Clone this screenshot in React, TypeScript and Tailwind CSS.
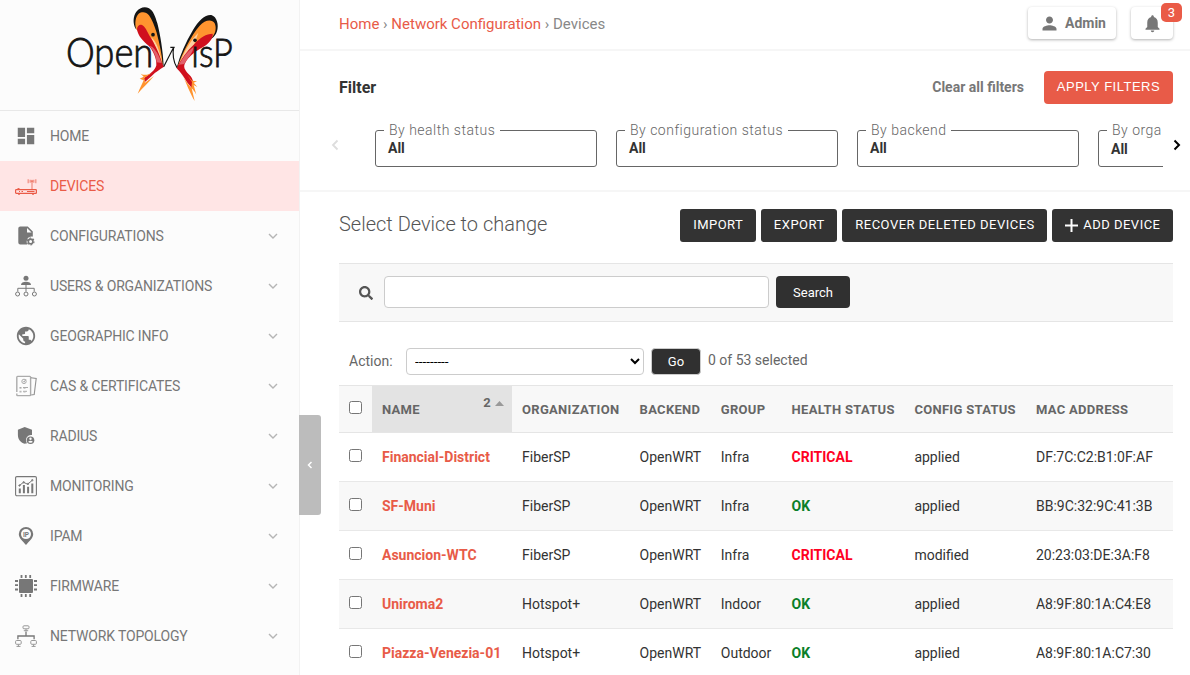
import React from "react";
import { MdDashboard, MdPublic, MdPerson, MdNotifications } from "react-icons/md";
import { FaSearch } from "react-icons/fa";

function Logo() {
  return (
    <svg width="200" height="110" viewBox="0 0 600 330" aria-label="OpenWISP">
      <path d="M257 86C248 70 249 48 259 35C269 22 285 18 297 25C311 33 316 51 322 70C331 105 339 155 341 198L336 192L300 110Z" fill="#151515" />
      <path d="M259 88C253 70 257 49 266 41C275 35 289 35 297 46C306 58 313 77 320 98C329 132 336 165 338 194L316 160Z" fill="#ff942f" />
      <path d="M303 112C316 120 326 142 337 190L324 158Z" fill="#ffd0a0" />
      <path d="M261 88C262 76 269 72 276 75C286 80 291 94 299 108C312 129 327 155 336 190L342 200C329 209 317 215 306 227L284 247L282 234C299 223 316 211 319 196C320 174 309 152 297 138C279 124 264 108 261 88Z" fill="#d0101e" />
      <path d="M298 138C309 138 324 156 335 189L320 187C318 166 309 149 298 138Z" fill="#e2616b" />
      <path d="M306 219C294 225 283 227 272 221L281 230L269 236L281 241C275 254 270 265 263 281C277 265 296 247 312 228L285 248L283 233Z" fill="#ff942f" />
      <path d="M380 203C390 166 407 126 429 90C446 61 466 43 484 45C501 50 507 75 501 94C498 104 493 110 486 115L430 150Z" fill="#151515" />
      <path d="M383 200C396 160 425 104 449 77C464 61 485 56 494 70C501 85 495 103 487 111L420 164Z" fill="#ff942f" />
      <path d="M386 196C400 158 420 123 445 98L430 140Z" fill="#ffd0a0" />
      <path d="M488 101C490 115 476 132 458 142C430 157 409 177 403 195C400 208 413 219 422 229C431 241 431 253 426 265L411 247C401 230 393 218 380 205C393 176 411 153 434 131C450 113 469 101 488 101Z" fill="#d0101e" />
      <path d="M387 194C399 171 415 152 431 141C430 158 412 175 403 192Z" fill="#e2616b" />
      <path d="M392 218C406 236 408 255 434 303L425 265C430 270 434 275 439 284L431 255L442 261L431 248L441 244L426 242L412 225L426 246L424 264L410 247Z" fill="#ff942f" />
      <circle cx="309" cy="104" r="5.5" fill="#151515" />
      <circle cx="435" cy="121" r="5.5" fill="#151515" />
      <path d="M341 200L371 142C367 160 370 187 381 203M361 142H374" stroke="#151515" strokeWidth="3.5" fill="none" />
      <g fill="#151515" stroke="#151515" strokeWidth="2.5" fontFamily="'Lato', sans-serif" fontWeight="300">
        <text x="48" y="202" fontSize="121" textLength="262" lengthAdjust="spacingAndGlyphs">Open</text>
        <text x="424" y="202" fontSize="118" textLength="124" lengthAdjust="spacingAndGlyphs">ısP</text>
      </g>
    </svg>
  );
}

function IconSvg({ children }: { children: React.ReactNode }) {
  return <svg width="22" height="22" viewBox="0 0 22 22" fill="none" stroke="currentColor">{children}</svg>;
}

const DeviceIcon = () => (
  <IconSvg>
    <rect x=".6" y="14.6" width="20.8" height="3.8" rx=".7" strokeWidth="1.2" />
    <path d="M2.5 13.6h2M3 19.2h2M17 19.2h2M4 16.5h1M6.5 16.5h1.5M12 16.5h7.5" strokeWidth="1" />
    <path d="M17 6v8.5M15.2 4.7v3M18.8 4.7v3M13.2 4.2v4M20.8 4.2v4" strokeWidth="1.3" opacity=".6" />
    <circle cx="17" cy="6" r="1.2" fill="currentColor" stroke="none" opacity=".6" />
  </IconSvg>
);
const ConfigIcon = () => (
  <IconSvg>
    <path d="M5.3 1.6h7.5l5 5v5.1c-4-.8-7.5 3-5.5 7.7H5.3a2 2 0 0 1-2-2V3.6c0-1.1.9-2 2-2Z" fill="currentColor" stroke="none" />
    <path d="M12 3v4.4h4.6Z" fill="#fcfcfc" stroke="none" />
    <circle cx="15.6" cy="16.4" r="2.3" strokeWidth="1.6" />
    <circle cx="15.6" cy="16.4" r="3.4" strokeWidth="1.2" strokeDasharray="1.8 1.76" />
  </IconSvg>
);
const UsersIcon = () => (
  <IconSvg>
    <circle cx="11" cy="3.2" r="2.5" fill="currentColor" stroke="none" />
    <path d="M6 10c0-2.4 2.2-3.2 5-3.2s5 .8 5 3.2Z" fill="currentColor" stroke="none" />
    <path d="M11 10v6.5M2.8 16.5v-3.2h16.4v3.2" />
    <circle cx="2.6" cy="19" r="2" /><circle cx="11" cy="19" r="2" /><circle cx="19.4" cy="19" r="2" />
  </IconSvg>
);
const CertIcon = () => (
  <IconSvg>
    <g opacity=".6">
      <path d="M1.8 17V2.2c0-.5.3-.8.8-.8h12.2c.5 0 .8.3.8.8v17.6c0 .5-.3.8-.8.8H2.6c-.5 0-.8-.3-.8-.8V18.5" strokeWidth="1.4" />
      <circle cx="9" cy="6.4" r="2.2" /><path d="m8 6.2 1 1 2-3M4.5 12.5h2M8 12.5h5M4.5 16.3h2M8 16.3h4" />
      <path d="M4.5 13.5h2M8.5 13.5h2M4.5 17.2h2M8.5 17.2h2" opacity=".6" />
    </g>
    <path d="M16 2.8l5.2.7-2 16-3 .5" strokeWidth="1.1" opacity=".8" />
  </IconSvg>
);
const RadiusIcon = () => (
  <IconSvg>
    <path d="M9.7 1.9 17 4.7v5.4c-4.8-.7-7.7 4.6-4.9 8.2l-2.4.5C5.4 17.7 2.9 14 2.9 10V4.7Z" fill="currentColor" stroke="none" />
    <circle cx="15.5" cy="15.2" r="3.8" fill="currentColor" stroke="none" />
    <circle cx="15.5" cy="13.7" r="1.2" fill="#fcfcfc" stroke="none" />
    <path d="M13.2 16.7c1-1.2 3.6-1.2 4.6 0-1 1.5-3.6 1.5-4.6 0Z" fill="#fcfcfc" stroke="none" />
  </IconSvg>
);
const MonitorIcon = () => (
  <IconSvg>
    <rect x=".6" y="1.6" width="20.8" height="19.2" rx="1.2" strokeWidth="1.1" />
    <path d="M4.8 18.2v-4.7M8.9 18.2V10M13.1 18.2v-6.4M17.3 18.2V8.4" strokeWidth="2" />
    <path d="m4 10.8 4.5-3.5 4 1.9 5-4" strokeWidth="1" />
    <circle cx="4.5" cy="10.5" r=".7" /><circle cx="8.7" cy="7.3" r=".7" /><circle cx="13" cy="8.9" r=".7" /><circle cx="17.3" cy="5.2" r=".7" />
  </IconSvg>
);
const IpamIcon = () => (
  <IconSvg>
    <path d="M11 1.9a7.2 7.2 0 0 0-7.2 7.2c0 4.2 4.2 7.5 7.2 10.9 3-3.4 7.2-6.7 7.2-10.9A7.2 7.2 0 0 0 11 1.9Z" fill="currentColor" stroke="none" />
    <circle cx="11" cy="9.1" r="5" fill="#fcfcfc" stroke="none" />
    <text x="8" y="11.6" fontSize="6.5" fontWeight="700" fontFamily="Roboto, sans-serif" fill="currentColor" stroke="none">IP</text>
  </IconSvg>
);
const ChipIcon = () => (
  <IconSvg>
    <rect x="4" y="4" width="14" height="14" rx="1" fill="currentColor" stroke="none" />
    <path d="M6.5 0v3M10.8 0v3M15.2 0v3M6.5 19v3M10.8 19v3M15.2 19v3M0 6h3M0 10.2h3M0 14.5h3M19 6h3M19 10.2h3M19 14.5h3" strokeWidth="1.8" />
  </IconSvg>
);
const TopologyIcon = () => (
  <IconSvg>
    <g opacity=".75">
      <rect x="8" y=".8" width="6" height="3" rx="1" /><path d="M11 4v2M8.8 5.7h4.4" />
      <rect x=".6" y="15.5" width="5.6" height="3.8" rx="1" /><path d="M3.4 19.5v2M1.5 21.4h4" />
      <rect x="15.8" y="15.5" width="5.6" height="3.8" rx="1" /><path d="M18.6 19.5v2M16.6 21.4h4" />
    </g>
    <path d="M11 6.5v5M2.9 14.2v-3.2h16.2v3.2" strokeWidth="1.3" />
  </IconSvg>
);

const menu: [string, React.ReactNode][] = [
  ["HOME", <MdDashboard size={22} />],
  ["DEVICES", <DeviceIcon />],
  ["CONFIGURATIONS", <ConfigIcon />],
  ["USERS & ORGANIZATIONS", <UsersIcon />],
  ["GEOGRAPHIC INFO", <MdPublic size={22} />],
  ["CAS & CERTIFICATES", <CertIcon />],
  ["RADIUS", <RadiusIcon />],
  ["MONITORING", <MonitorIcon />],
  ["IPAM", <IpamIcon />],
  ["FIRMWARE", <ChipIcon />],
  ["NETWORK TOPOLOGY", <TopologyIcon />],
];

function Sidebar() {
  return (
    <aside className="relative h-[675px] w-[300px] shrink-0 border-r border-[#f2f2f2] bg-[#fcfcfc]">
      <div className="flex h-[111px] justify-center border-b border-[#e8e8e8]"><Logo /></div>
      <nav>
        {menu.map(([label, icon], i) => (
          <a key={label} className={`flex h-[50px] items-center pl-[15px] pr-[20px] text-[14px] tracking-[-0.16px] ${i === 1 ? "bg-[#ffe5e5] text-[#ea5b47]" : "text-[#777]"}`}>
            <span className="flex w-[35px]">{icon}</span>
            <span className="flex-1">{label}</span>
            {i > 1 && (
              <svg width="12" height="12" viewBox="0 0 12 12" fill="none" stroke="#b5b5b5" strokeWidth="1.4"><path d="m2 4 4 4 4-4" /></svg>
            )}
          </a>
        ))}
      </nav>
      <button className="absolute left-[299px] top-[415px] flex h-[100px] w-[22px] items-center justify-center rounded-r-[3px] bg-[#bcbcbc]">
        <svg width="8" height="10" viewBox="0 0 8 10" fill="none" stroke="#fff" strokeWidth="1.5"><path d="M5.5 2 2.5 5l3 3" /></svg>
      </button>
    </aside>
  );
}

function FilterBox({ label, lower }: { label: string; lower?: boolean }) {
  return (
    <fieldset className="h-[45px] w-[222px] shrink-0 rounded-[3px] border border-[#666] pl-[12px]">
      <legend className="-ml-[4px] h-[16px] whitespace-nowrap pl-[5px] pr-[4.5px] text-[14px] font-light leading-[16px] tracking-[0.5px] text-[#666]">{label}</legend>
      <div className={`text-[14px] font-bold leading-[16px] text-[#333] ${lower ? "mt-[3px]" : "mt-[2px]"}`}>All</div>
    </fieldset>
  );
}

const rows = [
  ["Financial-District", "FiberSP", "Infra", "CRITICAL", "applied", "DF:7C:C2:B1:0F:AF"],
  ["SF-Muni", "FiberSP", "Infra", "OK", "applied", "BB:9C:32:9C:41:3B"],
  ["Asuncion-WTC", "FiberSP", "Infra", "CRITICAL", "modified", "20:23:03:DE:3A:F8"],
  ["Uniroma2", "Hotspot+", "Indoor", "OK", "applied", "A8:9F:80:1A:C4:E8"],
  ["Piazza-Venezia-01", "Hotspot+", "Outdoor", "OK", "applied", "A8:9F:80:1A:C7:30"],
];

const Check = () => <input type="checkbox" className="block h-[13px] w-[13px]" />;
const cols = "grid grid-cols-[33px_140px_117.6px_81.2px_70.8px_122.8px_121.6px_147px]";
const dark = "flex h-[33px] items-center whitespace-nowrap rounded-[3px] bg-[#333] pb-[1px] pl-[13px] pr-[12.5px] text-[13px] tracking-[0.49px] text-white";

export default function App() {
  return (
    <div className="flex h-[675px] w-[1190px] overflow-hidden bg-white font-['Roboto',sans-serif] text-[14px] text-[#333]">
      <Sidebar />
      <main className="flex w-[890px] flex-col">
        <header className="flex h-[51px] shrink-0 justify-between border-b-2 border-[#f6f6f6] pl-[39px] pr-[17px]">
          <div className="pt-[14px] text-[15px] leading-[20px] text-[#888]">
            <a className="text-[#e85b48]">Home</a> › <a className="text-[#e85b48]">Network Configuration</a> › Devices
          </div>
          <div className="flex gap-[15px] pt-[7px]">
            <button className="flex h-[32px] w-[88px] items-center rounded-[4px] pl-[11px] text-[14px] font-bold text-[#777] shadow-[0_1px_3px_rgba(0,0,0,0.3)]">
              <MdPerson size={21} /><span className="ml-[5px]">Admin</span>
            </button>
            <button className="relative flex h-[32px] w-[42px] items-center justify-center rounded-[4px] text-[#777] shadow-[0_1px_3px_rgba(0,0,0,0.3)]">
              <MdNotifications size={21} />
              <span className="absolute left-[30px] top-[-4px] flex h-[19px] w-[21px] items-center justify-center rounded-[5px] bg-[#ea5b47] text-[13px] text-white">3</span>
            </button>
          </div>
        </header>
        <section className="h-[141px] shrink-0 border-b-2 border-[#f6f6f6]">
          <div className="flex h-[73px] items-center pl-[39px] pr-[17px]">
            <h3 className="text-[16px] font-bold">Filter</h3>
            <a className="ml-auto mr-[20px] text-[14px] font-bold text-[#777]">Clear all filters</a>
            <button className="h-[33px] w-[129px] whitespace-nowrap rounded-[4px] bg-[#e85b48] pb-[1px] font-['Liberation_Sans',sans-serif] text-[13px] tracking-[0.5px] text-white">APPLY FILTERS</button>
          </div>
          <div className="flex pl-[30px]">
            <svg className="mt-[15px]" width="10" height="12" viewBox="0 0 10 12" fill="none" stroke="#ddd" strokeWidth="1.8"><path d="M7.5 1.5 3 6l4.5 4.5" /></svg>
            <div className="ml-[35px] -mt-[2px] flex w-[788px] gap-[19px] overflow-hidden">
              <FilterBox label="By health status" />
              <FilterBox label="By configuration status" />
              <FilterBox label="By backend" />
              <div className="w-[65px] overflow-hidden"><FilterBox label="By orga" lower /></div>
            </div>
            <svg className="ml-[9px] mt-[15px]" width="10" height="12" viewBox="0 0 10 12" fill="none" stroke="#000" strokeWidth="2"><path d="M2.5 1.5 7 6l-4.5 4.5" /></svg>
          </div>
        </section>
        <section className="w-[873px] pl-[39px]">
          <div className="flex h-[71px] items-start justify-between pt-[17px]">
            <h1 className="mt-[1px] text-[20px] font-light leading-[28px] text-[#555]">Select Device to change</h1>
            <div className="flex gap-[5px]">
              <button className={dark}>IMPORT</button>
              <button className={dark}>EXPORT</button>
              <button className={dark}>RECOVER DELETED DEVICES</button>
              <button className={dark}><svg className="mr-[5px] mt-[1px]" width="13" height="13" viewBox="0 0 13 13" stroke="#fff" strokeWidth="2"><path d="M6.5 0v13M0 6.5h13" /></svg>ADD DEVICE</button>
            </div>
          </div>
          <div className="flex h-[59px] items-start border-y border-[#e5e5e5] bg-[#f8f8f8] pl-[19.5px] pt-[12px]">
            <FaSearch size={14} className="mt-[10px] text-[#555]" />
            <input className="ml-[11.5px] h-[32px] w-[385px] rounded-[4px] border border-[#ccc] bg-white" />
            <button className="ml-[7px] h-[32px] w-[74px] rounded-[4px] bg-[#303030] pt-[1px] text-[13px] text-white">Search</button>
          </div>
          <div className="flex h-[63px] items-center pl-[10px] pt-[15px] text-[#666]">
            <span className="w-[57px]">Action:</span>
            <select className="h-[27px] w-[238px] rounded-[4px] border border-[#ccc] bg-white pl-[4px] text-[13.5px] text-black"><option>---------</option></select>
            <button className="ml-[7px] h-[27px] w-[50px] rounded-[4px] border border-[#ccc] bg-[#303030] pt-[1px] text-[13px] text-white">Go</button>
            <span className="-mt-[2px] ml-[7px]">0 of 53 selected</span>
          </div>
          <div className={`${cols} h-[48px] items-center border-y border-[#e5e5e5] bg-[#f8f8f8] text-[13px] font-bold tracking-[0.3px] text-[#666]`}>
            <span className="-mt-[3px] pl-[10px]"><Check /></span>
            <span className="flex h-full items-center justify-between bg-[#e3e3e3] pl-[10px] pr-[8px]">
              <span className="pt-[2px]">NAME</span>
              <span className="-mt-[13px] flex items-center gap-[4px]">2<svg className="mt-[2px]" width="9" height="5" viewBox="0 0 9 5"><path d="M4.5 0 9 5H0Z" fill="#999" /></svg></span>
            </span>
            {["ORGANIZATION", "BACKEND", "GROUP", "HEALTH STATUS", "CONFIG STATUS", "MAC ADDRESS"].map((t) => <span key={t} className="whitespace-nowrap pl-[10px] pt-[2px]">{t}</span>)}
          </div>
          {rows.map((r, i) => (
            <div key={r[0]} className={`${cols} h-[49px] items-center border-b border-[#e8e8e8] ${i % 2 ? "bg-[#f8f8f8]" : "bg-white"}`}>
              <span className="-mt-[3px] pl-[10px]"><Check /></span>
              <a className="whitespace-nowrap pl-[10px] font-bold text-[#e85b48]">{r[0]}</a>
              <span className="pl-[10px]">{r[1]}</span>
              <span className="pl-[10px]">OpenWRT</span>
              <span className="pl-[10px]">{r[2]}</span>
              <span className={`pl-[10px] font-bold ${r[3] === "OK" ? "text-[#0b8029]" : "text-[#ff0022]"}`}>{r[3]}</span>
              <span className="pl-[10px]">{r[4]}</span>
              <span className="pl-[10px]">{r[5]}</span>
            </div>
          ))}
        </section>
      </main>
    </div>
  );
}
